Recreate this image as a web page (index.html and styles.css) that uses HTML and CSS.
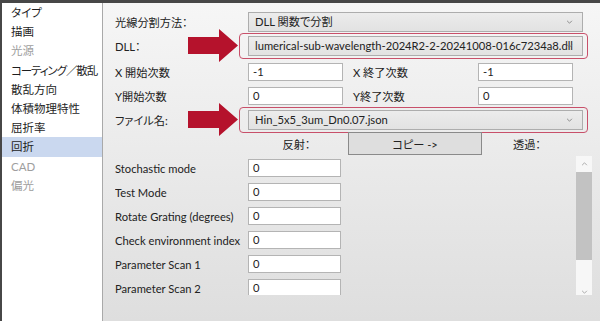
FILE: index.html
```html
<!DOCTYPE html>
<html lang="ja">
<head>
  <meta charset="UTF-8">
  <meta name="viewport" content="width=device-width, initial-scale=1.0">
  <title>回折設定</title>
  <link rel="stylesheet" href="styles.css">
</head>
<body>
  <div class="window">
    <ul class="sidebar">
      <li>タイプ</li>
      <li>描画</li>
      <li class="disabled">光源</li>
      <li class="tight">コーティング／散乱</li>
      <li>散乱方向</li>
      <li>体積物理特性</li>
      <li>屈折率</li>
      <li class="selected">回折</li>
      <li class="disabled">CAD</li>
      <li class="disabled">偏光</li>
    </ul>

    <div class="panel">
      <div class="row">
        <span class="label">光線分割方法：</span>
        <div class="select wide">DLL 関数で分割<svg class="chev" viewBox="0 0 8 5"><path d="M1 1 L4 4 L7 1"/></svg></div>
      </div>
      <div class="row gap-after">
        <span class="label">DLL：</span>
        <svg class="arrow" viewBox="0 0 50 33"><polygon points="0,8 31,8 31,0 50,16.5 31,33 31,25 0,25"/></svg>
        <div class="select wide marked">lumerical-sub-wavelength-2024R2-2-20241008-016c7234a8.dll<svg class="chev" viewBox="0 0 8 5"><path d="M1 1 L4 4 L7 1"/></svg></div>
      </div>
      <div class="row">
        <span class="label">X 開始次数</span>
        <div class="input">-1</div>
        <span class="label mid">X 終了次数</span>
        <div class="input">-1</div>
      </div>
      <div class="row">
        <span class="label">Y開始次数</span>
        <div class="input">0</div>
        <span class="label mid">Y終了次数</span>
        <div class="input">0</div>
      </div>
      <div class="row">
        <span class="label">ファイル名:</span>
        <svg class="arrow" viewBox="0 0 50 33"><polygon points="0,8 31,8 31,0 50,16.5 31,33 31,25 0,25"/></svg>
        <div class="select wide marked">Hin_5x5_3um_Dn0.07.json<svg class="chev" viewBox="0 0 8 5"><path d="M1 1 L4 4 L7 1"/></svg></div>
      </div>
      <div class="row copy-row">
        <span class="side-title">反射：</span>
        <button class="copy">コピー -&gt;</button>
        <span class="side-title">透過：</span>
      </div>

      <div class="list">
        <div class="list-rows">
          <div class="row"><span class="label">Stochastic mode</span><div class="input short">0</div></div>
          <div class="row"><span class="label">Test Mode</span><div class="input short">0</div></div>
          <div class="row"><span class="label">Rotate Grating (degrees)</span><div class="input short">0</div></div>
          <div class="row"><span class="label">Check environment index</span><div class="input short">0</div></div>
          <div class="row"><span class="label">Parameter Scan 1</span><div class="input short">0</div></div>
          <div class="row"><span class="label">Parameter Scan 2</span><div class="input short">0</div></div>
        </div>
        <div class="scrollbar">
          <div class="sb-btn"><svg viewBox="0 0 8 5"><path d="M1 4 L4 1 L7 4"/></svg></div>
          <div class="sb-thumb"></div>
          <div class="sb-track"></div>
          <div class="sb-btn"><svg viewBox="0 0 8 5"><path d="M1 1 L4 4 L7 1"/></svg></div>
        </div>
      </div>
    </div>
  </div>
</body>
</html>
```

FILE: styles.css
```css
body {
  margin: 0;
  font-family: "Lato", "Noto Sans CJK JP", sans-serif;
  font-size: 11.2px;
  font-feature-settings: "palt";
  color: #222;
  background: #fff;
}
.window {
  display: flex;
  width: 600px;
  height: 321px;
  box-sizing: border-box;
  border-top: 3px solid #474747;
  border-left: 2px solid #474747;
  overflow: hidden;
}
.sidebar {
  list-style: none;
  margin: 0;
  padding: 0;
  width: 100px;
  flex-shrink: 0;
  background: #fff;
  border-right: 1px solid #a9a9a9;
}
.sidebar li {
  height: 19.2px;
  line-height: 19.2px;
  padding-left: 9px;
  font-size: 11.5px;
  color: #1e1e1e;
  white-space: nowrap;
}
.sidebar li.tight {
  letter-spacing: -1.1px;
}
.sidebar li.disabled {
  color: #9e9e9e;
}
.sidebar li.selected {
  background: #cad8ef;
}
.panel {
  flex: 1;
  min-width: 0;
  padding: 7px 0 0 12px;
  background: linear-gradient(#f6f6f6, #dedede);
}
.row {
  position: relative;
  display: flex;
  align-items: center;
  height: 24px;
}
.row.gap-after {
  margin-bottom: 2px;
}
.label {
  width: 133px;
  flex-shrink: 0;
  white-space: nowrap;
}
.label.mid {
  width: 135px;
  padding-left: 10px;
  box-sizing: border-box;
}
.select {
  position: relative;
  height: 20px;
  line-height: 18px;
  box-sizing: border-box;
  padding-left: 6px;
  border: 1px solid #adadad;
  background: linear-gradient(#ececec, #e2e2e2);
  white-space: nowrap;
}
.select.wide {
  width: 335px;
}
.select.marked::after {
  content: "";
  position: absolute;
  top: -4px;
  bottom: -4px;
  left: -10px;
  right: -6px;
  border: 1.5px solid #c8506a;
  border-radius: 4px;
}
.chev {
  position: absolute;
  right: 9px;
  top: 7px;
  width: 7px;
  height: 4px;
  fill: none;
  stroke: #777;
  stroke-width: 1;
}
.arrow {
  position: absolute;
  left: 73px;
  top: -5px;
  width: 50px;
  height: 33px;
  fill: #b5122c;
}
.input {
  width: 95px;
  height: 18px;
  line-height: 16px;
  box-sizing: border-box;
  padding-left: 4px;
  border: 1px solid #b4b4b4;
  background: #fff;
}
.input.short {
  width: 93px;
}
.copy-row {
  height: 23px;
}
.side-title {
  flex-shrink: 0;
  text-align: center;
}
.side-title:first-child {
  width: 233px;
  padding-left: 130px;
  box-sizing: border-box;
}
.side-title:last-child {
  width: 90px;
}
.copy {
  width: 134px;
  height: 23px;
  padding: 0;
  border: 1px solid #8a8a8a;
  background: #dedede;
  font-family: inherit;
  font-size: inherit;
  font-feature-settings: "palt";
  color: #222;
}
.list {
  display: grid;
  grid-template-columns: 1fr 16px;
  height: 139px;
  margin-top: 1px;
  padding-right: 8px;
  overflow: hidden;
}
.list-rows {
  min-width: 0;
}
.scrollbar {
  display: grid;
  grid-template-rows: 16px 88px 1fr 16px;
  background: #f7f7f7;
}
.sb-btn {
  display: flex;
  align-items: center;
  justify-content: center;
}
.sb-btn svg {
  width: 7px;
  height: 4px;
  fill: none;
  stroke: #999;
  stroke-width: 1;
}
.sb-thumb {
  background: #c2c2c2;
}
```
